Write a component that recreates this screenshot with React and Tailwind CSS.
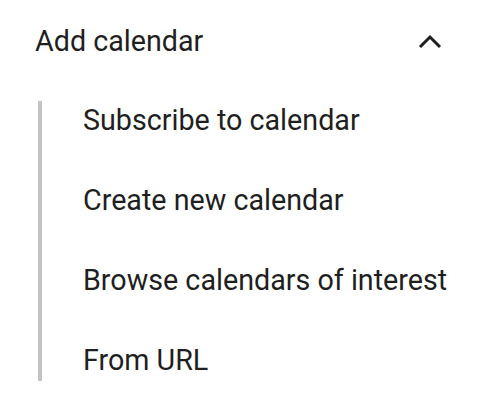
export default function App() {
  const items = ["Subscribe to calendar", "Create new calendar", "Browse calendars of interest", "From URL"];
  return (
    <div className="w-[492px] h-[412px] bg-white text-[#1f1f1f]" style={{ fontFamily: "Roboto, sans-serif" }}>
      <div className="flex items-center justify-between h-[84px] pl-[35px] pr-[50px]">
        <span className="text-[28.7px]">Add calendar</span>
        <svg width="24" height="24" viewBox="0 0 24 24" fill="none">
          <path d="M2 17 L12 7 L22 17" stroke="#1f1f1f" strokeWidth="3" />
        </svg>
      </div>
      <div className="ml-[38px] mt-[17px] border-l-4 border-[#c4c4c4] w-fit pr-4 flex flex-col gap-[40px]">
        {items.map((t) => (
          <div key={t} className="h-[40px] flex items-center pl-[41px] text-[28.7px] whitespace-nowrap">
            {t}
          </div>
        ))}
      </div>
    </div>
  );
}
